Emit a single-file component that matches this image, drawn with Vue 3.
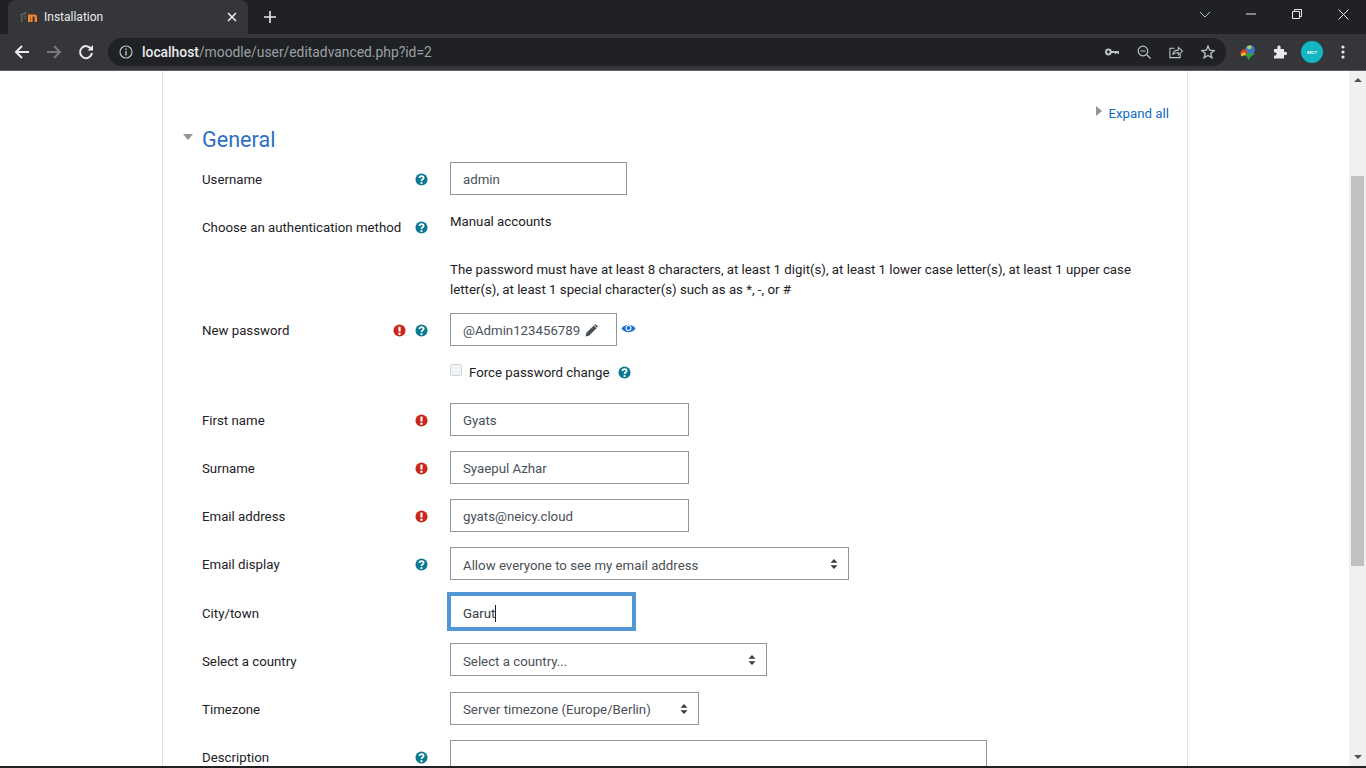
<template>
  <div class="ventana">

    <div class="barra-pestanas">
      <div class="pestana">
        <svg class="favicon" width="18" height="12" viewBox="0 0 18 12">
          <path d="M0 3.5 L5.5 1 L6.5 1.6 L6.5 3 L2.6 4.6 V11 H0.8 V4.4 Z" fill="#5d5d5d"/>
          <path d="M3.5 5 L6.5 4 V8 H3.5 Z" fill="#4a4a4a"/>
          <path d="M8 11 V3.6 H14.6 Q17 3.6 17 6 V11 H14.6 V6.2 Q14.6 5.6 14 5.6 H12.6 V11 H10.4 V5.6 H10 V11 Z" fill="#f0882a"/>
        </svg>
        <span class="pestana-titulo">Installation</span>
        <svg class="pestana-cerrar" width="10" height="10" viewBox="0 0 10 10">
          <path d="M1 1 L9 9 M9 1 L1 9" stroke="#e8eaed" stroke-width="1.7"/>
        </svg>
      </div>
      <svg class="nueva-pestana" width="12" height="12" viewBox="0 0 12 12">
        <path d="M6 0 V12 M0 6 H12" stroke="#e8eaed" stroke-width="1.6"/>
      </svg>
      <div class="controles-ventana">
        <svg width="12" height="7" viewBox="0 0 12 7">
          <path d="M1 1 L6 6 L11 1" fill="none" stroke="#bdc1c6" stroke-width="1"/>
        </svg>
        <svg width="10" height="2" viewBox="0 0 10 2">
          <path d="M0 1 H10" stroke="#e8eaed" stroke-width="1"/>
        </svg>
        <svg width="10" height="10" viewBox="0 0 10 10">
          <path d="M0.5 2.5 H7.5 V9.5 H0.5 Z M2.5 2.5 V0.5 H9.5 V7.5 H7.5" fill="none" stroke="#e8eaed" stroke-width="1"/>
        </svg>
        <svg width="11" height="11" viewBox="0 0 11 11">
          <path d="M0.5 0.5 L10.5 10.5 M10.5 0.5 L0.5 10.5" stroke="#e8eaed" stroke-width="1"/>
        </svg>
      </div>
    </div>

    <div class="barra-navegador">
      <svg class="nav-icono" width="16" height="16" viewBox="0 0 16 16">
        <path d="M15 8 H2 M8 2 L2 8 L8 14" fill="none" stroke="#e8eaed" stroke-width="2"/>
      </svg>
      <svg class="nav-icono" width="16" height="16" viewBox="0 0 16 16">
        <path d="M1 8 H14 M8 2 L14 8 L8 14" fill="none" stroke="#77797c" stroke-width="2"/>
      </svg>
      <svg class="nav-icono" width="16" height="16" viewBox="0 0 16 16">
        <path d="M13.2 5 A6 6 0 1 0 14 9" fill="none" stroke="#e8eaed" stroke-width="2"/>
        <path d="M9.5 6.5 H15 V1 Z" fill="#e8eaed"/>
      </svg>
      <div class="omnibox">
        <svg width="14" height="14" viewBox="0 0 14 14">
          <circle cx="7" cy="7" r="6" fill="none" stroke="#bdc1c6" stroke-width="1.2"/>
          <path d="M7 6 V10.5 M7 3.4 V5" stroke="#bdc1c6" stroke-width="1.4"/>
        </svg>
        <span class="url"><b>localhost</b>/moodle/user/editadvanced.php?id=2</span>
        <div class="omnibox-iconos">
          <svg width="14" height="8" viewBox="0 0 14 8">
            <circle cx="3.4" cy="4" r="2.4" fill="none" stroke="#bdc1c6" stroke-width="2"/>
            <path d="M5.5 3 H14 V6 H12.6 V5 H11.2 V6 H9.8 V5 H5.5 Z" fill="#bdc1c6"/>
          </svg>
          <svg width="14" height="14" viewBox="0 0 14 14">
            <circle cx="6" cy="6" r="4.8" fill="none" stroke="#bdc1c6" stroke-width="1.2"/>
            <path d="M3.5 6 H8.5 M9.5 9.5 L13.5 13.5" stroke="#bdc1c6" stroke-width="1.2"/>
          </svg>
          <svg width="14" height="14" viewBox="0 0 15 14">
            <path d="M6 3 H1 V13 H12 V9" fill="none" stroke="#bdc1c6" stroke-width="1.2"/>
            <path d="M4 10 C4.5 6.5 7 5 10 5 V2 L14.5 6 L10 10 V7.5 C7.5 7.5 5.5 8 4 10 Z" fill="none" stroke="#bdc1c6" stroke-width="1.1"/>
          </svg>
          <svg width="14" height="14" viewBox="0 0 14 14">
            <path d="M7 1 L8.7 5.2 L13.2 5.5 L9.7 8.4 L10.9 12.8 L7 10.4 L3.1 12.8 L4.3 8.4 L0.8 5.5 L5.3 5.2 Z" fill="none" stroke="#bdc1c6" stroke-width="1.3"/>
          </svg>
        </div>
      </div>
      <div class="extensiones">
        <svg width="16" height="15" viewBox="0 0 16 15">
          <circle cx="10" cy="5" r="4.8" fill="#3a78c8"/>
          <path d="M7 1.4 Q9.5 -0.4 12 1 L10.5 4 L7.5 4 Z" fill="#a9d46a"/>
          <path d="M0 8.5 Q2 3.5 6 4.5 L9 9 L5 8 Q2.5 7 1.5 10.5 Z" fill="#d9482b"/>
          <path d="M0.8 10 Q3 6.5 5.5 8 L8 11 Q4 9.5 1.8 11.5 Z" fill="#f2c230"/>
          <path d="M5 8.5 H15.5 L11 11.5 L8.5 15 Z" fill="#2e9e3f"/>
        </svg>
        <svg width="14" height="14" viewBox="0 0 14 14">
          <path d="M1 4 H4.5 C4 1 5 0.5 6 0.5 C7 0.5 8 1 7.5 4 H11 V7 C13.5 6.5 14 7.5 14 8.5 C14 9.5 13.5 10.5 11 10 V13.5 H1 V10.5 C3 11 3.5 10 3.5 9 C3.5 8 3 7 1 7.5 Z" fill="#e8eaed"/>
        </svg>
        <div class="avatar">
          <span class="avatar-texto">KECT</span>
        </div>
        <svg width="4" height="14" viewBox="0 0 4 14">
          <circle cx="2" cy="2" r="1.6" fill="#e8eaed"/>
          <circle cx="2" cy="7" r="1.6" fill="#e8eaed"/>
          <circle cx="2" cy="12" r="1.6" fill="#e8eaed"/>
        </svg>
      </div>
    </div>

    <div class="contenido">
      <div class="pagina">
        <div class="tarjeta">
          <div class="expandir">
            <span class="triangulo-der"></span>
            <a class="enlace">Expand all</a>
          </div>

          <div class="seccion">
            <span class="triangulo-abajo"></span>
            <h3>General</h3>
          </div>

          <div v-for="campo in campos" :key="campo.etiqueta" class="fila" :class="campo.clase">
            <div class="etiqueta">
              <span>{{ campo.etiqueta }}</span>
              <span class="iconos">
                <svg v-if="campo.requerido" class="ico" viewBox="0 0 14 14">
                  <circle cx="7" cy="7" r="6.5" fill="#c9281c"/>
                  <path d="M7 2.8 V8" stroke="#fff" stroke-width="2.4"/>
                  <circle cx="7" cy="10.5" r="1.3" fill="#fff"/>
                </svg>
                <svg v-if="campo.ayuda" class="ico" viewBox="0 0 14 14">
                  <circle cx="7" cy="7" r="6.5" fill="#0a7a92"/>
                  <path d="M4.8 5.4 C4.8 2.6 9.3 2.6 9.3 5.2 C9.3 6.9 7 6.8 7 8.6" fill="none" stroke="#fff" stroke-width="1.9"/>
                  <circle cx="7" cy="10.9" r="1.2" fill="#fff"/>
                </svg>
              </span>
            </div>

            <div class="valor">
              <template v-if="campo.tipo === 'texto'">
                <div class="caja" :class="{ foco: campo.foco }" :style="{ width: campo.ancho + 'px' }">
                  {{ campo.valor }}<span v-if="campo.foco" class="cursor"></span>
                </div>
              </template>

              <template v-else-if="campo.tipo === 'select'">
                <div class="caja caja-select" :style="{ width: campo.ancho + 'px' }">
                  <span>{{ campo.valor }}</span>
                  <svg width="8" height="12" viewBox="0 0 8 12">
                    <path d="M4 1 L7.5 4.8 H0.5 Z M4 11 L0.5 7.2 H7.5 Z" fill="#343a40"/>
                  </svg>
                </div>
              </template>

              <template v-else-if="campo.tipo === 'estatico'">
                <div class="estatico">{{ campo.valor }}</div>
              </template>

              <template v-else-if="campo.tipo === 'password'">
                <div class="aviso-password">
                  The password must have at least 8 characters, at least 1 digit(s), at least 1 lower case letter(s), at least 1 upper case letter(s), at least 1 special character(s) such as as *, -, or #
                </div>
                <div class="password-fila">
                  <div class="caja caja-password">
                    {{ campo.valor }}
                    <svg width="13" height="13" viewBox="0 0 13 13">
                      <path d="M0.5 12.5 L1.2 9 L8.8 1.4 L11.6 4.2 L4 11.8 Z M9.6 0.7 Q10.4 0 11.2 0.7 L12.3 1.8 Q13 2.6 12.3 3.4 L12 3.8 L9.2 1 Z" fill="#495057"/>
                    </svg>
                  </div>
                  <svg class="ojo" width="15" height="11" viewBox="0 0 15 11">
                    <path d="M0.5 5.5 C3.5 0.5 11.5 0.5 14.5 5.5 C11.5 10.5 3.5 10.5 0.5 5.5 Z" fill="#1f6fd0"/>
                    <circle cx="7.5" cy="5" r="3" fill="#fff"/>
                    <circle cx="7.5" cy="5" r="2" fill="#1f6fd0"/>
                  </svg>
                </div>
                <div class="forzar">
                  <span class="check"></span>
                  <span>Force password change</span>
                  <svg class="ico" viewBox="0 0 14 14">
                    <circle cx="7" cy="7" r="6.5" fill="#0a7a92"/>
                    <path d="M4.8 5.4 C4.8 2.6 9.3 2.6 9.3 5.2 C9.3 6.9 7 6.8 7 8.6" fill="none" stroke="#fff" stroke-width="1.9"/>
                    <circle cx="7" cy="10.9" r="1.2" fill="#fff"/>
                  </svg>
                </div>
              </template>
            </div>
          </div>
        </div>
      </div>

      <div class="scroll">
        <span class="flecha-arriba"></span>
        <div class="scroll-pulgar"></div>
        <span class="flecha-abajo"></span>
      </div>
    </div>

    <div class="linea-inferior"></div>
  </div>
</template>

<script setup>
const campos = [
  { etiqueta: 'Username', tipo: 'texto', valor: 'admin', ancho: 177, ayuda: true },
  { etiqueta: 'Choose an authentication method', tipo: 'estatico', valor: 'Manual accounts', ayuda: true, clase: 'fila-auth' },
  { etiqueta: 'New password', tipo: 'password', valor: '@Admin123456789', requerido: true, ayuda: true, clase: 'fila-password' },
  { etiqueta: 'First name', tipo: 'texto', valor: 'Gyats', ancho: 239, requerido: true },
  { etiqueta: 'Surname', tipo: 'texto', valor: 'Syaepul Azhar', ancho: 239, requerido: true },
  { etiqueta: 'Email address', tipo: 'texto', valor: 'gyats@neicy.cloud', ancho: 239, requerido: true },
  { etiqueta: 'Email display', tipo: 'select', valor: 'Allow everyone to see my email address', ancho: 399, ayuda: true, clase: 'fila-display' },
  { etiqueta: 'City/town', tipo: 'texto', valor: 'Garut', ancho: 183, foco: true, clase: 'baja' },
  { etiqueta: 'Select a country', tipo: 'select', valor: 'Select a country...', ancho: 317, clase: 'baja fila-pais' },
  { etiqueta: 'Timezone', tipo: 'select', valor: 'Server timezone (Europe/Berlin)', ancho: 249 },
  { etiqueta: 'Description', tipo: 'texto', valor: '', ancho: 537, ayuda: true, clase: 'fila-desc' }
]
</script>

<style>
html, body { margin: 0; height: 100%; overflow: hidden; background: #fff; }
</style>

<style scoped>
.ventana { width: 1366px; height: 768px; display: flex; flex-direction: column; overflow: hidden; position: relative; font-family: Roboto, "Open Sans", sans-serif; }

.barra-pestanas { height: 34px; background: #202124; display: flex; align-items: flex-end; padding-left: 8px; flex: none; }
.pestana { width: 240px; height: 34px; box-sizing: border-box; background: #35363a; border-radius: 8px 8px 0 0; display: flex; align-items: center; padding: 0 11px 1px 12px; color: #e8eaed; font-size: 12px; }
.favicon { margin-right: 6px; }
.pestana-titulo { flex: 1; }
.nueva-pestana { margin: 0 0 11px 16px; }
.controles-ventana { margin-left: auto; height: 34px; display: flex; align-items: center; }
.controles-ventana svg { margin-bottom: 6px; }
.controles-ventana svg:nth-child(1) { margin-right: 35px; }
.controles-ventana svg:nth-child(2) { margin-right: 36px; }
.controles-ventana svg:nth-child(3) { margin-right: 36px; }
.controles-ventana svg:nth-child(4) { margin-right: 17px; }

.barra-navegador { height: 36px; background: #35363a; display: flex; align-items: center; padding-left: 14px; flex: none; border-bottom: 1px solid #5f6064; }
.nav-icono { margin-right: 16px; }
.omnibox { width: 1118px; height: 28px; margin-left: -2px; box-sizing: border-box; background: #202124; border-radius: 14px; display: flex; align-items: center; padding: 0 11px; }
.url { margin-left: 9px; font-size: 13.85px; color: #9aa0a6; }
.url b { color: #e8eaed; font-weight: 500; }
.omnibox-iconos { margin-left: auto; display: flex; align-items: center; gap: 18px; }
.extensiones { display: flex; align-items: center; margin-left: 14px; }
.extensiones svg:nth-child(2) { margin-left: 17px; }
.avatar { width: 22px; height: 22px; margin-left: 14px; border-radius: 50%; background: #12b5c1; display: flex; align-items: center; justify-content: center; }
.avatar-texto { font-size: 4px; color: #fff; font-weight: 700; }
.extensiones svg:last-child { margin-left: 18px; }

.contenido { flex: 1; display: flex; min-height: 0; }
.pagina { width: 1349px; flex: none; overflow: hidden; }
.tarjeta { width: 1026px; min-height: 800px; margin-left: 162px; box-sizing: border-box; border-left: 1px solid #dee2e6; border-right: 1px solid #dee2e6; padding: 33px 18px 0 19px; color: #1d2125; font-size: 13.25px; }

.expandir { display: flex; align-items: center; justify-content: flex-end; gap: 7px; height: 16px; }
.enlace { color: #0f6cbf; padding-top: 2px; }
.triangulo-der { width: 0; height: 0; border-left: 6px solid #8f959e; border-top: 5px solid transparent; border-bottom: 5px solid transparent; margin-bottom: 2px; }

.seccion { display: flex; align-items: center; height: 32px; margin-top: 2px; margin-bottom: 8px; }
.seccion h3 { margin: 2px 0 0 9px; font-size: 21.6px; font-weight: 400; color: #2f6fc4; }
.triangulo-abajo { width: 0; height: 0; border-top: 6px solid #8f959e; border-left: 5px solid transparent; border-right: 5px solid transparent; margin-bottom: 2px; margin-left: 1px; }

.fila { display: flex; align-items: flex-start; min-height: 33px; margin-bottom: 15px; padding-left: 20px; }
.fila-pais { margin-bottom: 16px; }
.etiqueta { width: 248px; flex: none; display: flex; justify-content: space-between; align-items: center; height: 33px; padding: 2px 22px 0 0; box-sizing: border-box; white-space: nowrap; }
.iconos { display: flex; gap: 9px; align-items: center; }
.ico { width: 13px; height: 13px; display: block; flex: none; }
.valor { flex: 1; min-width: 0; color: #1d2125; }

.caja { height: 33px; box-sizing: border-box; border: 1px solid #8f959e; padding: 2px 12px 0; display: flex; align-items: center; color: #495057; }
.caja.foco { border-color: #5197d5; outline: 3px solid #5197d5; outline-offset: 0; color: #343a40; }
.cursor { width: 1px; height: 17px; background: #1d2125; }
.caja-select { justify-content: space-between; padding: 0 10px 0 12px; }
.caja-select span { padding-top: 2px; }
.baja .etiqueta { padding-top: 4px; }
.baja .caja.foco { padding-top: 4px; }
.baja .caja-select span, .fila-display .caja-select span { padding-top: 4px; }

.fila-auth { margin-bottom: 16px; }
.estatico { margin-top: 1px; height: 21px; line-height: 21px; }
.aviso-password { line-height: 20px; margin-bottom: 13px; margin-top: 1px; }
.fila-password .etiqueta { margin-top: 54px; }
.password-fila { display: flex; align-items: flex-start; gap: 4px; }
.caja-password { width: 167px; gap: 5px; white-space: nowrap; }
.ojo { margin-top: 10px; }
.forzar { display: flex; align-items: center; margin-top: 16px; height: 20px; }
.check { width: 10px; height: 10px; border: 1px solid #ced4da; border-radius: 2px; background: #f1f2f3; margin-right: 7px; margin-bottom: 4px; }
.forzar .ico { margin-left: 8px; }
.fila-password { margin-bottom: 21px; }

.scroll { width: 17px; flex: none; background: #f0f0f0; display: flex; flex-direction: column; align-items: center; position: relative; }
.flecha-arriba { margin-top: 7px; width: 0; height: 0; border-bottom: 4px solid #505050; border-left: 4px solid transparent; border-right: 4px solid transparent; }
.scroll-pulgar { width: 13px; height: 390px; background: #c1c1c1; margin-top: 94px; }
.flecha-abajo { margin-top: auto; margin-bottom: 9px; width: 0; height: 0; border-top: 4px solid #505050; border-left: 4px solid transparent; border-right: 4px solid transparent; }

.linea-inferior { position: absolute; left: 0; right: 0; bottom: 0; height: 2px; background: #202124; }
</style>
